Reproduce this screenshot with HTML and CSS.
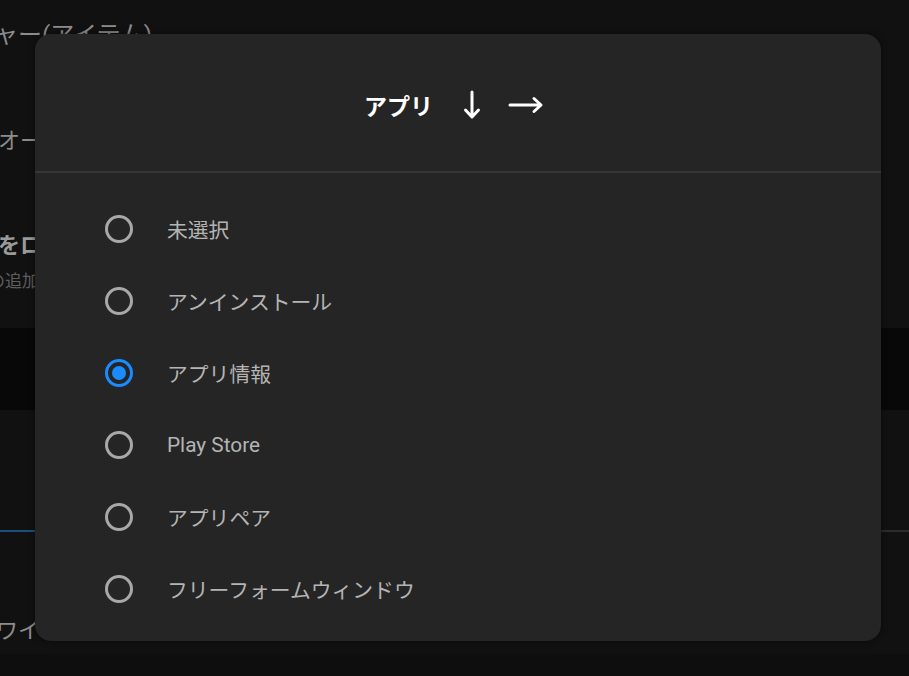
FILE: index.html
```html
<html lang="ja">
<head>
  <meta charset="utf-8">
  <meta name="viewport" content="width=device-width, initial-scale=1.0">
  <title>アプリ</title>
  <link rel="stylesheet" href="styles.css">
</head>
<body>
  <div class="settings">
    <div class="settings-row row-top"><span class="cut">ャー(アイテム)</span></div>
    <div class="settings-row row-mid"><span>オー</span></div>
    <div class="settings-row row-bold">
      <span class="strong">をロ</span>
      <span class="sub">の追加</span>
    </div>
    <div class="band"></div>
    <div class="tabs"><div class="tab-line"><span class="tab-active"></span></div></div>
    <div class="settings-row row-last"><span>ワイ</span></div>
    <div class="foot"></div>
  </div>

  <div class="dialog">
    <div class="dialog-head">
      <span class="dialog-title">アプリ</span>
      <svg class="arrow-down" width="18" height="30" viewBox="0 0 18 30"><path d="M9 2 V27 M2.5 20 L9 27 L15.5 20" fill="none" stroke="#fff" stroke-width="3" stroke-linecap="round" stroke-linejoin="round"/></svg>
      <svg class="arrow-right" width="36" height="18" viewBox="0 0 36 18"><path d="M2 9 H33 M26 2.5 L33 9 L26 15.5" fill="none" stroke="#fff" stroke-width="3" stroke-linecap="round" stroke-linejoin="round"/></svg>
    </div>
    <ul class="options">
      <li class="option"><span class="radio"></span><span>未選択</span></li>
      <li class="option"><span class="radio"></span><span>アンインストール</span></li>
      <li class="option selected"><span class="radio"></span><span>アプリ情報</span></li>
      <li class="option"><span class="radio"></span><span>Play Store</span></li>
      <li class="option"><span class="radio"></span><span>アプリペア</span></li>
      <li class="option"><span class="radio"></span><span>フリーフォームウィンドウ</span></li>
    </ul>
  </div>
</body>
</html>
```

FILE: styles.css
```css
:root {
  --bg: #111111;
  --dialog-bg: #252525;
  --text-dim: #8c8c8c;
  --radio: #a8a8a8;
  --accent: #1a8cff;
}
body {
  margin: 0;
  height: 676px;
  overflow: hidden;
  background-color: var(--bg);
  font-family: Roboto, "Noto Sans CJK JP", sans-serif;
  position: relative;
}
.settings {
  display: flex;
  flex-direction: column;
  height: 676px;
}
.settings-row {
  display: flex;
  flex-direction: column;
  color: var(--text-dim);
  font-size: 22px;
  line-height: 30px;
}
.row-top {
  padding-top: 20px;
  height: 82px;
  box-sizing: border-box;
  font-size: 24px;
}
.row-top .cut {
  margin-left: -6px;
}
.row-mid {
  height: 110px;
  padding-top: 44px;
  box-sizing: border-box;
}
.row-mid span {
  margin-left: -2px;
}
.row-bold {
  height: 136px;
  padding-top: 39px;
  box-sizing: border-box;
}
.row-bold .strong {
  font-weight: bold;
  color: #9a9a9a;
  margin-left: -2px;
}
.row-bold .sub {
  font-size: 17px;
  line-height: 24px;
  color: #5e5e5e;
  margin-top: 8px;
  margin-left: -12px;
}
.band {
  height: 82px;
  background-color: #080808;
}
.tabs {
  height: 122px;
  display: flex;
  flex-direction: column;
  justify-content: flex-end;
}
.tab-line {
  height: 2px;
  background-color: #2c2c2c;
}
.tab-active {
  display: block;
  width: 40px;
  height: 2px;
  background-color: #1c4f80;
}
.row-last {
  height: 122px;
  padding-top: 84px;
  box-sizing: border-box;
  background-color: #111;
}
.row-last span {
  margin-left: -4px;
}
.foot {
  flex: 1;
  background-color: #0e0e0e;
}

/* dialog over the dimmed settings page */
.dialog {
  position: absolute;
  left: 35px;
  top: 34px;
  width: 846px;
  height: 607px;
  border-radius: 16px;
  background-color: var(--dialog-bg);
  box-shadow: 0 0 6px rgba(0, 0, 0, 0.5);
  display: flex;
  flex-direction: column;
}
.dialog-head {
  height: 139px;
  border-bottom: 2px solid #363636;
  display: flex;
  justify-content: center;
  align-items: center;
  padding-top: 4px;
  box-sizing: border-box;
}
.dialog-title {
  color: #fff;
  font-weight: bold;
  font-size: 23px;
  margin-left: -8px;
}
.arrow-down {
  margin-left: 30px;
}
.arrow-right {
  margin-left: 27px;
}
.options {
  list-style: none;
  margin: 0;
  padding: 20px 0 0 70px;
}
.option {
  height: 72px;
  display: flex;
  align-items: center;
  gap: 34px;
  color: #b4b4b4;
  font-size: 20.8px;
}
.radio {
  width: 28px;
  height: 28px;
  box-sizing: border-box;
  border: 3px solid var(--radio);
  border-radius: 50%;
  flex: none;
  display: flex;
  align-items: center;
  justify-content: center;
}
.option.selected .radio {
  border-color: var(--accent);
}
.option.selected .radio::after {
  content: "";
  width: 14px;
  height: 14px;
  border-radius: 50%;
  background-color: var(--accent);
}
```
